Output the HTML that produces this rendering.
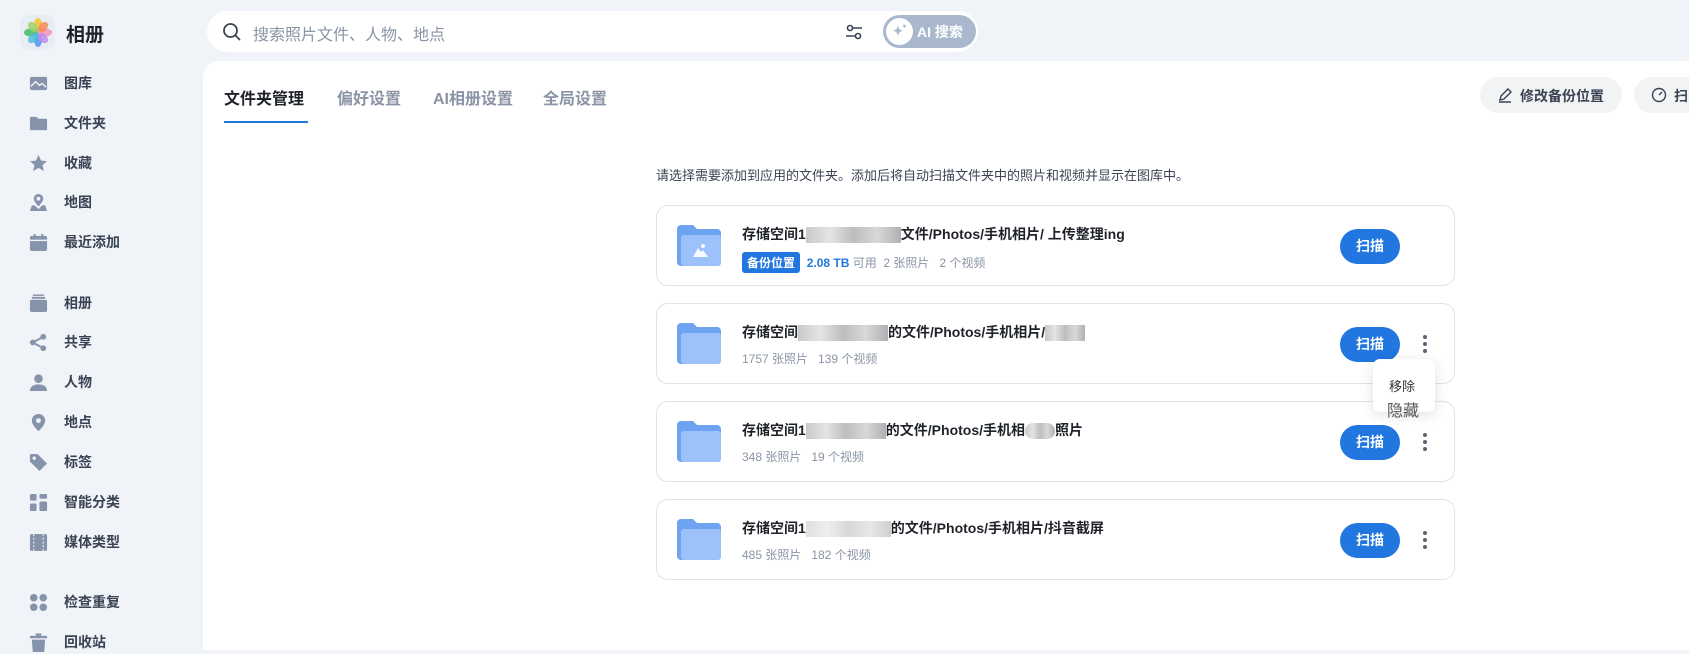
<!DOCTYPE html>
<html><head><meta charset="utf-8"><style>
*{margin:0;padding:0;box-sizing:border-box}
body{width:1689px;height:650px;overflow:hidden;background:#f0f3f8;font-family:"Liberation Sans","Noto Sans CJK SC",sans-serif;position:relative;color:#1f2329}
.abs{position:absolute}
.nav{position:absolute;left:29px;height:24px;display:flex;align-items:center;font-size:14px;font-weight:bold;color:#3a4354}
.nav svg{width:19px;height:19px;margin-right:16px;fill:#8593ab}
.panel{position:absolute;left:203px;top:61px;right:0;bottom:0;background:#fff;border-top-left-radius:16px}
.tab{position:absolute;top:85px;font-size:16px;font-weight:bold;color:#8a94a6;white-space:nowrap}
.card{position:absolute;left:656px;width:799px;height:81px;border:1px solid #dfe3ea;border-radius:12px;background:#fff}
.fold{position:absolute;left:20px;top:19px}
.title{position:absolute;left:85px;top:18px;font-size:14px;font-weight:bold;color:#1f2329;white-space:nowrap}
.meta{position:absolute;left:85px;top:46px;font-size:12px;color:#8a94a6;white-space:nowrap}
.scan{position:absolute;left:683px;top:23px;width:60px;height:35px;border-radius:18px;background:#2176e0;color:#fff;font-size:14px;font-weight:bold;text-align:center;line-height:35px}
.dots{position:absolute;left:766px;top:31px;width:6px}
.dots i{display:block;width:4px;height:4px;border-radius:2px;background:#5a6272;margin:0 0 3px 0}
.blur{display:inline-block;height:16px;vertical-align:middle;background:linear-gradient(90deg,#c9c9c9,#e4e4e4,#bdbdbd,#d8d8d8,#b0b0b0)}
</style></head><body>
<div class="abs" style="left:20px;top:15px;width:35px;height:35px;border-radius:9px;background:#e8edf4"></div>
<svg class="abs" style="left:23px;top:17px" width="30" height="31" viewBox="0 0 30 31">
<ellipse cx="15" cy="8" rx="4" ry="7" fill="#f7c64a"/>
<ellipse cx="15" cy="23" rx="4" ry="7" fill="#6aa2f0"/>
<ellipse cx="8" cy="15.5" rx="7" ry="4" fill="#5cc27a"/>
<ellipse cx="22" cy="15.5" rx="7" ry="4" fill="#f0a0c0"/>
<ellipse cx="10" cy="10" rx="4" ry="6" transform="rotate(-45 10 10)" fill="#9bd36a" opacity=".85"/>
<ellipse cx="20" cy="10" rx="4" ry="6" transform="rotate(45 20 10)" fill="#f78a5a" opacity=".85"/>
<ellipse cx="10" cy="21" rx="4" ry="6" transform="rotate(45 10 21)" fill="#4cc0d8" opacity=".85"/>
<ellipse cx="20" cy="21" rx="4" ry="6" transform="rotate(-45 20 21)" fill="#c28af0" opacity=".85"/>
</svg>
<div class="abs" style="left:66px;top:20px;font-size:19px;font-weight:bold;color:#1f2329">相册</div>

<div class="nav" style="top:71px"><svg viewBox="0 0 20 20"><rect x="1" y="3" width="18" height="14" rx="2"/><path d="M2 13l5-5 4 4 3-2 4 4" stroke="#f0f3f8" stroke-width="1.5" fill="none"/></svg>图库</div>
<div class="nav" style="top:111px"><svg viewBox="0 0 20 20"><path d="M1 4a1 1 0 011-1h6l2 2h8a1 1 0 011 1v10a1 1 0 01-1 1H2a1 1 0 01-1-1z"/></svg>文件夹</div>
<div class="nav" style="top:151px"><svg viewBox="0 0 20 20"><path d="M10 1l2.7 6 6.3.5-4.8 4.2 1.5 6.3L10 14.6 4.3 18l1.5-6.3L1 7.5 7.3 7z"/></svg>收藏</div>
<div class="nav" style="top:190px"><svg viewBox="0 0 20 20"><path d="M10 1a5 5 0 015 5c0 3-5 8-5 8S5 9 5 6a5 5 0 015-5zM3 13l3 0 4 4 4-4h3l2 6H1z"/><circle cx="10" cy="6" r="2" fill="#f0f3f8"/></svg>地图</div>
<div class="nav" style="top:230px"><svg viewBox="0 0 20 20"><rect x="1" y="3" width="18" height="16" rx="2"/><rect x="5" y="1" width="2" height="4"/><rect x="13" y="1" width="2" height="4"/><rect x="1" y="7" width="18" height="1.5" fill="#f0f3f8"/></svg>最近添加</div>
<div class="nav" style="top:291px"><svg viewBox="0 0 20 20"><rect x="1" y="6" width="18" height="13" rx="2"/><rect x="3" y="3" width="14" height="2"/><rect x="4" y="0.5" width="12" height="1.5"/></svg>相册</div>
<div class="nav" style="top:330px"><svg viewBox="0 0 20 20"><circle cx="15" cy="4" r="3"/><circle cx="4" cy="10" r="3"/><circle cx="15" cy="16" r="3"/><path d="M15 4L4 10l11 6" stroke="#8593ab" stroke-width="2" fill="none"/></svg>共享</div>
<div class="nav" style="top:370px"><svg viewBox="0 0 20 20"><circle cx="10" cy="6" r="4.5"/><path d="M1 19c0-5 4-7 9-7s9 2 9 7z"/></svg>人物</div>
<div class="nav" style="top:410px"><svg viewBox="0 0 20 20"><path d="M10 1a7 7 0 017 7c0 5-7 11-7 11S3 13 3 8a7 7 0 017-7z"/><circle cx="10" cy="8" r="2.5" fill="#f0f3f8"/></svg>地点</div>
<div class="nav" style="top:450px"><svg viewBox="0 0 20 20"><path d="M1 2a1 1 0 011-1h7l10 10-8 8L1 9z"/><circle cx="5.5" cy="5.5" r="1.8" fill="#f0f3f8"/></svg>标签</div>
<div class="nav" style="top:490px"><svg viewBox="0 0 20 20"><rect x="1" y="1" width="7" height="7" rx="1.5"/><rect x="11" y="1" width="8" height="5" rx="1.5"/><rect x="1" y="11" width="7" height="8" rx="1.5"/><rect x="11" y="9" width="8" height="10" rx="1.5"/></svg>智能分类</div>
<div class="nav" style="top:530px"><svg viewBox="0 0 20 20"><rect x="1" y="1" width="18" height="18" rx="2"/><path d="M5 1v18M15 1v18" stroke="#f0f3f8" stroke-width="1.2" stroke-dasharray="2 2"/></svg>媒体类型</div>
<div class="nav" style="top:590px"><svg viewBox="0 0 20 20"><circle cx="5" cy="5" r="4"/><circle cx="15" cy="5" r="4"/><circle cx="5" cy="15" r="4"/><circle cx="15" cy="15" r="4"/></svg>检查重复</div>
<div class="nav" style="top:630px"><svg viewBox="0 0 20 20"><rect x="1" y="3" width="18" height="2.5"/><rect x="7" y="0.5" width="6" height="2.5"/><path d="M3 7h14l-1 13H4z"/></svg>回收站</div>

<div class="abs" style="left:207px;top:11px;width:771px;height:41px;border-radius:21px;background:#fff"></div>
<svg class="abs" style="left:222px;top:22px" width="20" height="20" viewBox="0 0 20 20"><circle cx="8.5" cy="8.5" r="6.5" stroke="#3a4354" stroke-width="1.8" fill="none"/><path d="M13.5 13.5l4 4" stroke="#3a4354" stroke-width="1.8" stroke-linecap="round"/></svg>
<div class="abs" style="left:253px;top:21px;font-size:16px;color:#8a94a6">搜索照片文件、人物、地点</div>
<svg class="abs" style="left:844px;top:22px" width="20" height="20" viewBox="0 0 20 20" fill="none" stroke="#3a4354" stroke-width="1.6"><circle cx="6" cy="6" r="2.5"/><path d="M9 6h9M2 14h9"/><circle cx="14" cy="14" r="2.5"/></svg>
<div class="abs" style="left:883px;top:15px;width:93px;height:33px;border-radius:17px;background:#a9b8cc"></div>
<div class="abs" style="left:886px;top:18px;width:27px;height:27px;border-radius:14px;background:#fff"></div>
<svg class="abs" style="left:890px;top:22px" width="19" height="19" viewBox="0 0 19 19"><path d="M8 3c.6 4 1.8 5.2 5.5 5.8-3.7.6-4.9 1.8-5.5 5.8-.6-4-1.8-5.2-5.5-5.8C6.2 8.2 7.4 7 8 3z" fill="#a9b8cc"/><circle cx="14.5" cy="4" r="1.4" fill="#a9b8cc"/></svg>
<div class="abs" style="left:917px;top:22px;font-size:14px;font-weight:bold;color:#fff">AI 搜索</div>

<div class="panel"></div>
<div class="tab" style="left:224px;color:#1f2329">文件夹管理</div>
<div class="tab" style="left:337px">偏好设置</div>
<div class="tab" style="left:433px">AI相册设置</div>
<div class="tab" style="left:543px">全局设置</div>
<div class="abs" style="left:224px;top:121px;width:84px;height:2px;background:#2176e0"></div>

<div class="abs" style="left:1480px;top:77px;width:142px;height:36px;border-radius:18px;background:#f1f3f5"></div>
<svg class="abs" style="left:1497px;top:87px" width="16" height="16" viewBox="0 0 16 16" fill="none" stroke="#3a4354" stroke-width="1.4"><path d="M3 13l1-4 7-7 3 3-7 7zM2 15h12"/></svg>
<div class="abs" style="left:1520px;top:86px;font-size:14px;font-weight:bold;color:#3a4354">修改备份位置</div>
<div class="abs" style="left:1634px;top:77px;width:80px;height:36px;border-radius:18px;background:#f1f3f5"></div>
<svg class="abs" style="left:1651px;top:87px" width="16" height="16" viewBox="0 0 16 16" fill="none" stroke="#3a4354" stroke-width="1.4"><circle cx="8" cy="8" r="6.5"/><path d="M8 8l3-3"/></svg>
<div class="abs" style="left:1674px;top:86px;font-size:14px;font-weight:bold;color:#3a4354">扫</div>

<div class="abs" style="left:656px;top:165px;font-size:13px;color:#3a4354">请选择需要添加到应用的文件夹。添加后将自动扫描文件夹中的照片和视频并显示在图库中。</div>

<svg width="0" height="0" style="position:absolute"><defs>
<g id="f"><path d="M0 4a4 4 0 014-4h12l4 4h20a4 4 0 014 4v29a4 4 0 01-4 4H4a4 4 0 01-4-4z" fill="#6ea3f2"/><rect x="4" y="10" width="40" height="31" rx="3" fill="#9dc1fa"/></g>
</defs></svg>

<div class="card" style="top:205px">
<svg class="fold" width="46" height="42"><use href="#f"/><path d="M16 32l5-9 3 4 2-2 5 7z" fill="#fff" opacity=".9"/><circle cx="26" cy="21" r="2" fill="#fff" opacity=".9"/></svg>
<div class="title">存储空间1<span class="blur" style="width:95px"></span>文件/Photos/手机相片/ 上传整理ing</div>
<div class="meta"><span style="display:inline-block;background:#2176e0;color:#fff;font-weight:bold;padding:2px 5px;border-radius:3px">备份位置</span>&nbsp; <b style="color:#2176e0">2.08 TB</b> 可用 &nbsp;2 张照片 &nbsp; 2 个视频</div>
<div class="scan">扫描</div>
</div>

<div class="card" style="top:303px">
<svg class="fold" width="46" height="42"><use href="#f"/></svg>
<div class="title">存储空间<span class="blur" style="width:90px"></span>的文件/Photos/手机相片/<span class="blur" style="width:40px"></span></div>
<div class="meta">1757 张照片 &nbsp; 139 个视频</div>
<div class="scan">扫描</div>
<div class="dots"><i></i><i></i><i></i></div>
</div>

<div class="card" style="top:401px">
<svg class="fold" width="46" height="42"><use href="#f"/></svg>
<div class="title">存储空间1<span class="blur" style="width:80px"></span>的文件/Photos/手机相<span class="blur" style="width:30px;border-radius:8px"></span>照片</div>
<div class="meta">348 张照片 &nbsp; 19 个视频</div>
<div class="scan">扫描</div>
<div class="dots"><i></i><i></i><i></i></div>
</div>

<div class="card" style="top:499px">
<svg class="fold" width="46" height="42"><use href="#f"/></svg>
<div class="title">存储空间1<span class="blur" style="width:85px;opacity:.6"></span>的文件/Photos/手机相片/抖音截屏</div>
<div class="meta">485 张照片 &nbsp; 182 个视频</div>
<div class="scan">扫描</div>
<div class="dots"><i></i><i></i><i></i></div>
</div>

<div class="abs" style="left:1373px;top:359px;width:62px;height:53px;border-radius:7px;background:#fff;box-shadow:0 3px 14px rgba(0,0,0,.12)"></div>
<div class="abs" style="left:1389px;top:376px;font-size:13px;color:#333">移除</div>
<div class="abs" style="left:1387px;top:397px;font-size:16px;color:#555">隐藏</div>
</body></html>
